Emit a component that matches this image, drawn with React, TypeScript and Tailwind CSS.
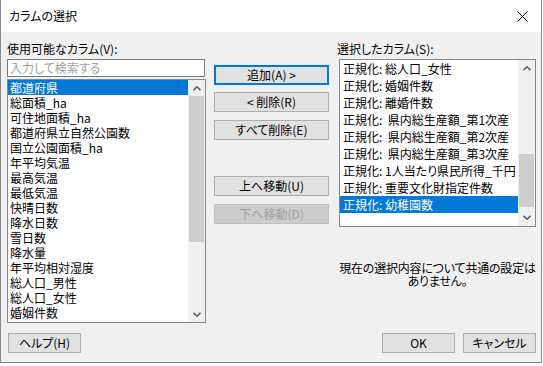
import React from 'react';

const leftItems = [
  '都道府県',
  '総面積_ha',
  '可住地面積_ha',
  '都道府県立自然公園数',
  '国立公園面積_ha',
  '年平均気温',
  '最高気温',
  '最低気温',
  '快晴日数',
  '降水日数',
  '雪日数',
  '降水量',
  '年平均相対湿度',
  '総人口_男性',
  '総人口_女性',
  '婚姻件数',
];

const rightItems = [
  '正規化: 総人口_女性',
  '正規化: 婚姻件数',
  '正規化: 離婚件数',
  '正規化:  県内総生産額_第1次産',
  '正規化:  県内総生産額_第2次産',
  '正規化:  県内総生産額_第3次産',
  '正規化: 1人当たり県民所得_千円',
  '正規化: 重要文化財指定件数',
  '正規化: 幼稚園数',
];

const Chevron: React.FC<{ down?: boolean }> = ({ down }) => (
  <svg width="8" height="5" viewBox="0 0 8 5">
    <polyline
      points={down ? '0.5,0.8 4,4.2 7.5,0.8' : '0.5,4.2 4,0.8 7.5,4.2'}
      fill="none"
      stroke="#606060"
      strokeWidth="1.6"
    />
  </svg>
);

const Btn: React.FC<{ children: React.ReactNode; className?: string; focused?: boolean; disabled?: boolean }> = ({
  children,
  className = '',
  focused,
  disabled,
}) => {
  const look = focused
    ? 'border-2 border-[#0078d7] bg-[#e1e1e1] text-black'
    : disabled
      ? 'border border-[#bfbfbf] bg-[#cccccc] text-[#a0a0a0]'
      : 'border border-[#adadad] bg-[#e1e1e1] text-black';
  return (
    <div className={`flex h-[20px] items-center justify-center text-[12px] leading-none ${look} ${className}`}>
      {children}
    </div>
  );
};

export default function App() {
  return (
    <div className="h-[366px] w-[543px] bg-white font-['Yu_Gothic_UI','Noto_Sans_CJK_JP',sans-serif] text-[12px] text-black [font-feature-settings:'palt']">
      <div className="flex h-[363px] w-[542px] flex-col border-x border-b border-[#8a8a8a]">
        {/* title bar */}
        <div className="flex h-[32px] items-center justify-between bg-white pl-[8px] pr-[8px]">
          <span className="text-[12px]">カラムの選択</span>
          <svg width="11" height="11" viewBox="0 0 11 11" className="mr-[5px]">
            <path d="M0.5 0.5 L10.5 10.5 M10.5 0.5 L0.5 10.5" stroke="#000" strokeWidth="1" />
          </svg>
        </div>

        {/* body */}
        <div className="flex flex-1 flex-col bg-[#f0f0f0] pt-[9px]">
          <div className="flex items-start">
            {/* left column */}
            <div className="ml-[6px] flex w-[199px] flex-col">
              <div className="h-[16px] leading-[16px]">使用可能なカラム(V):</div>
              <div className="mt-[2px] flex h-[18px] w-[198px] items-center border border-[#7a7a7a] bg-white pl-[2px] text-[#a0a0a0]">
                入力して検索する
              </div>
              <div className="mt-[2px] flex h-[244px] border border-[#828790] bg-white">
                <div className="flex-1 overflow-hidden">
                  {leftItems.map((t, i) => (
                    <div
                      key={t}
                      className={`flex h-[15px] items-center overflow-hidden whitespace-nowrap pl-[2px] ${i === 0 ? 'bg-[#0078d7] text-white' : ''}`}
                    >
                      <span className="leading-[14px]">{t}</span>
                    </div>
                  ))}
                </div>
                <div className="flex w-[17px] flex-col bg-[#f0f0f0]">
                  <div className="flex h-[16px] items-center justify-center">
                    <Chevron />
                  </div>
                  <div className="flex-1">
                    <div className="mx-[1px] h-[146px] bg-[#cdcdcd]" />
                  </div>
                  <div className="flex h-[16px] items-center justify-center">
                    <Chevron down />
                  </div>
                </div>
              </div>
            </div>

            {/* middle buttons */}
            <div className="ml-[8px] flex w-[115px] flex-col pt-[24px]">
              <Btn focused>追加(A) &gt;</Btn>
              <Btn className="mt-[7px]">&lt; 削除(R)</Btn>
              <Btn className="mt-[8px]">すべて削除(E)</Btn>
              <Btn className="mt-[36px]">上へ移動(U)</Btn>
              <Btn className="mt-[8px]" disabled>
                下へ移動(D)
              </Btn>
            </div>

            {/* right column */}
            <div className="ml-[10px] flex w-[197px] flex-col">
              <div className="-ml-[2px] h-[16px] leading-[16px]">選択したカラム(S):</div>
              <div className="mt-[2px] flex h-[168px] border border-[#828790] bg-white">
                <div className="flex-1 overflow-hidden">
                  {rightItems.map((t, i) => (
                    <div
                      key={t}
                      className={`h-[17px] overflow-hidden whitespace-pre pl-[3px] leading-[17px] ${i === rightItems.length - 1 ? 'bg-[#0078d7] text-white' : ''}`}
                    >
                      {t}
                    </div>
                  ))}
                </div>
                <div className="flex w-[17px] flex-col bg-[#f0f0f0]">
                  <div className="flex h-[17px] items-center justify-center">
                    <Chevron />
                  </div>
                  <div className="flex-1 pt-[77px]">
                    <div className="mx-[1px] h-[53px] bg-[#cdcdcd]" />
                  </div>
                  <div className="flex h-[17px] items-center justify-center">
                    <Chevron down />
                  </div>
                </div>
              </div>
              <div className="-mx-[6px] mt-[34px] flex flex-col items-center whitespace-nowrap leading-[13px] tracking-[-0.2px]">
                <span>現在の選択内容について共通の設定は</span>
                <span>ありません。</span>
              </div>
            </div>
          </div>

          {/* bottom buttons */}
          <div className="mt-[10px] flex pl-[7px] pr-[5px]">
            <Btn className="w-[73px]">ヘルプ(H)</Btn>
            <Btn className="ml-auto w-[73px]">OK</Btn>
            <Btn className="ml-[8px] w-[73px]">キャンセル</Btn>
          </div>
        </div>
      </div>
    </div>
  );
}
